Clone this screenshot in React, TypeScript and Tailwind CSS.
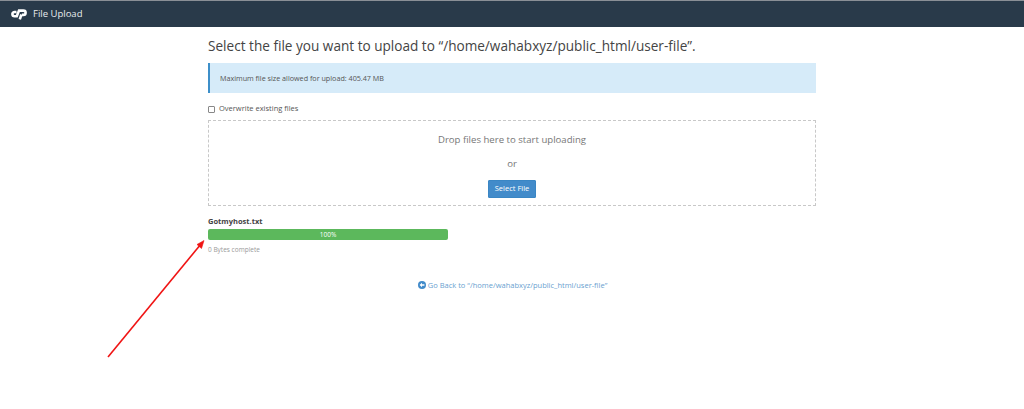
const App = () => {
  return (
    <div className="relative h-[409px] w-[1024px] overflow-hidden bg-white font-['Open_Sans',sans-serif] text-[#333]">
      {/* top bar */}
      <header className="flex h-[27px] items-center gap-[6px] border-t border-[#8a8f96] bg-[#293a4a] pl-[11px]">
        <svg width="16" height="11" viewBox="0 0 16 11" fill="none" stroke="#fff" strokeWidth="2.6">
          <path d="M5.5 3H3.6C2.3 3 1.4 3.9 1.4 5.1s.9 2.2 2.2 2.2h2.2L8 1.6h4.4c1.2 0 2.2.9 2.2 2.1s-1 2.2-2.2 2.2h-1.5" />
          <path d="M10.4 5.5 8.8 10.4" />
        </svg>
        <span className="text-[9.5px] leading-none text-[#e8ecef]">File Upload</span>
      </header>

      <main className="mx-auto w-[608px] pt-[12px]">
        <h1 className="text-[13.6px] leading-[14px] whitespace-nowrap text-[#444]">
          Select the file you want to upload to “/home/wahabxyz/public_html/user-file”.
        </h1>

        <div className="mt-[10px] flex h-[30px] items-center border-l-2 border-[#3d8fc9] bg-[#d6ebf9] pl-[10px] text-[7.2px] text-[#555]">
          Maximum file size allowed for upload: 405.47 MB
        </div>

        <label className="mt-[11px] flex h-[9px] items-center gap-[4px] text-[7.5px] text-[#555]">
          <input type="checkbox" className="m-0 mt-[1px] h-[7px] w-[7px] appearance-none rounded-[1px] border border-[#888] bg-white" />
          Overwrite existing files
        </label>

        <section className="mt-[7px] flex h-[86px] flex-col items-center border border-dashed border-[#c8c8c8] pt-[12px]">
          <p className="text-[9.6px] leading-[14px] text-[#777]">Drop files here to start uploading</p>
          <p className="mt-[10px] text-[9.6px] leading-[14px] text-[#777]">or</p>
          <button className="mt-[9px] h-[18px] w-[48px] rounded-[1px] border border-[#3a86c4] bg-[#428bca] text-[7.5px] text-white">
            Select File
          </button>
        </section>

        <div className="mt-[11px] text-[7.5px] leading-[9px] font-bold text-[#444]">Gotmyhost.txt</div>
        <div className="mt-[3px] flex h-[11px] w-[240px] items-center justify-center rounded-[2px] bg-[#5cb85c] text-[6.5px] text-white">
          100%
        </div>
        <div className="mt-[5px] text-[6.5px] leading-[9px] text-[#999]">0 Bytes complete</div>

        <a className="mt-[26px] flex items-center justify-center gap-[2px] pl-[1px] text-[7.5px] leading-[10px] text-[#6a9fd0]">
          <svg width="8" height="8" viewBox="0 0 8 8">
            <circle cx="4" cy="4" r="4" fill="#428bca" />
            <path d="M1.6 4 4 1.8v1.4h2.4v1.6H4v1.4z" fill="#fff" />
          </svg>
          Go Back to “/home/wahabxyz/public_html/user-file”
        </a>
      </main>

      {/* red annotation arrow */}
      <svg className="absolute left-0 top-0" width="1024" height="409" fill="none">
        <path d="M108 357 201 244" stroke="#f01414" strokeWidth="1.6" />
        <path d="M204 240.5 197 244.5 201.5 248.5z" fill="#f01414" stroke="#f01414" strokeWidth="0.6" />
      </svg>
    </div>
  );
};

export default App;
